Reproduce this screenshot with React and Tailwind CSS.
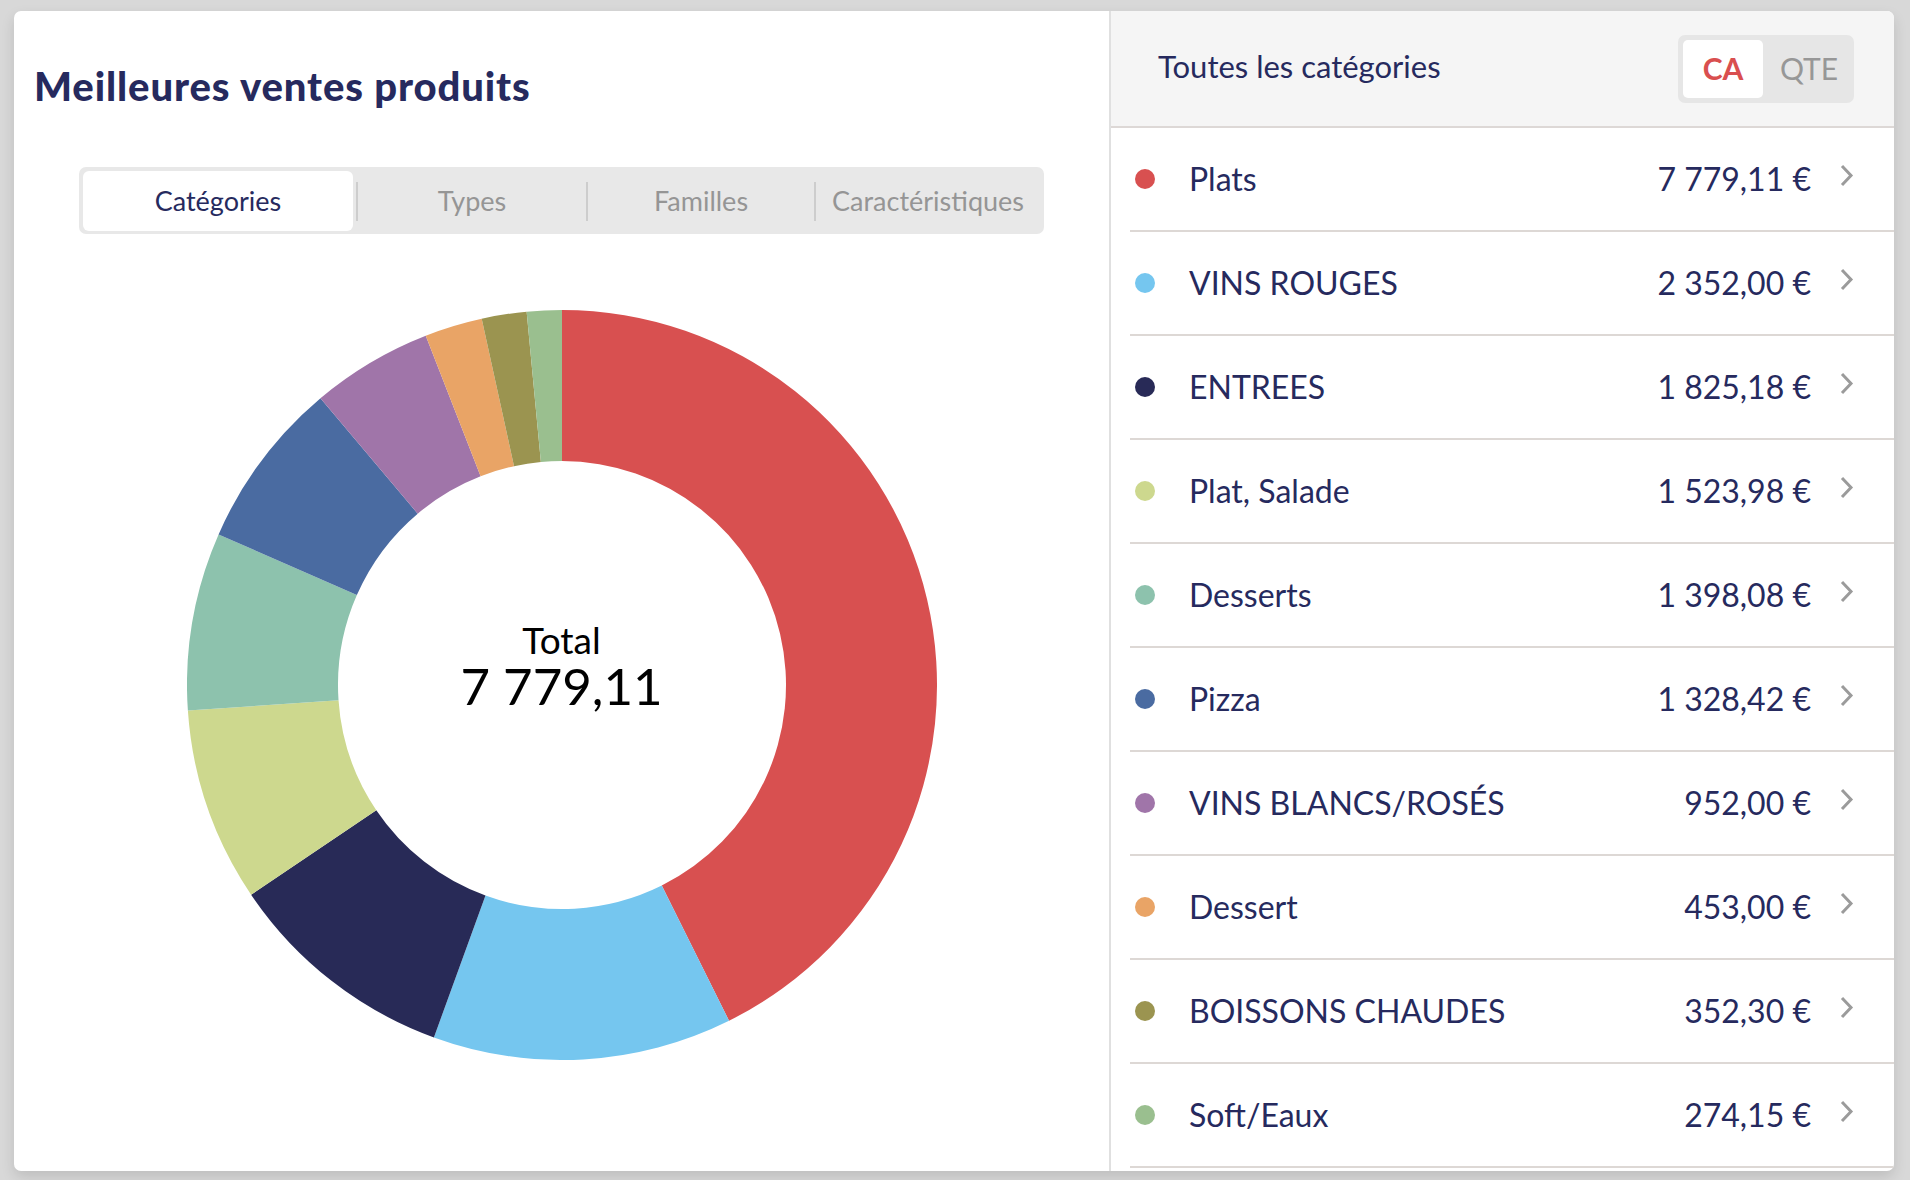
import React from 'react';

const NAVY = '#262a5e';

const categories = [
  { name: 'Plats', value: 7779.11, label: '7\u202f779,11 €', color: '#d85050' },
  { name: 'VINS ROUGES', value: 2352.0, label: '2\u202f352,00 €', color: '#75c6ef' },
  { name: 'ENTREES', value: 1825.18, label: '1\u202f825,18 €', color: '#282a57' },
  { name: 'Plat, Salade', value: 1523.98, label: '1\u202f523,98 €', color: '#cdd88e' },
  { name: 'Desserts', value: 1398.08, label: '1\u202f398,08 €', color: '#8dc2ad' },
  { name: 'Pizza', value: 1328.42, label: '1\u202f328,42 €', color: '#4a6ba1' },
  { name: 'VINS BLANCS/ROSÉS', value: 952.0, label: '952,00 €', color: '#a075a9' },
  { name: 'Dessert', value: 453.0, label: '453,00 €', color: '#e9a466' },
  { name: 'BOISSONS CHAUDES', value: 352.3, label: '352,30 €', color: '#9b9450' },
  { name: 'Soft/Eaux', value: 274.15, label: '274,15 €', color: '#9abf8f' },
];

const tabs = [
  { label: 'Catégories', w: 'w-[270px]' },
  { label: 'Types', w: 'w-[228px]' },
  { label: 'Familles', w: 'w-[226px]' },
  { label: 'Caractéristiques', w: 'flex-1' },
];

function arcPath(cx, cy, r, r0, a0, a1) {
  const p = (rad, a) => [cx + rad * Math.sin(a), cy - rad * Math.cos(a)];
  const large = a1 - a0 > Math.PI ? 1 : 0;
  const [x0, y0] = p(r, a0);
  const [x1, y1] = p(r, a1);
  const [x2, y2] = p(r0, a1);
  const [x3, y3] = p(r0, a0);
  return `M${x0} ${y0} A${r} ${r} 0 ${large} 1 ${x1} ${y1} L${x2} ${y2} A${r0} ${r0} 0 ${large} 0 ${x3} ${y3} Z`;
}

function Donut() {
  const total = categories.reduce((s, c) => s + c.value, 0);
  let acc = 0;
  return (
    <div className="relative w-[750px] h-[750px]">
      <svg width="750" height="750" viewBox="0 0 750 750">
        {categories.map(c => {
          const a0 = (acc / total) * Math.PI * 2;
          acc += c.value;
          const a1 = (acc / total) * Math.PI * 2;
          return <path key={c.name} d={arcPath(375, 375, 375, 224, a0, a1)} fill={c.color} />;
        })}
      </svg>
      <div className="absolute inset-0 flex flex-col items-center justify-center pb-[38px] text-black">
        <div className="text-[37px] leading-[40px]">Total</div>
        <div className="text-[51px] leading-[52px]">7 779,11</div>
      </div>
    </div>
  );
}

function Chevron() {
  return (
    <svg width="15" height="26" viewBox="0 0 15 26" className="shrink-0">
      <polyline points="3,3 12,12.5 3,22" fill="none" stroke="#9b9b9b" strokeWidth="3" />
    </svg>
  );
}

export default function App() {
  return (
    <div className="w-[1910px] h-[1180px] bg-[#d8d8d8] pt-[11px] pl-[14px]" style={{ fontFamily: 'Lato, "Noto Sans", sans-serif' }}>
      <div className="w-[1880px] h-[1160px] bg-white rounded-[7px] shadow-[0_6px_14px_rgba(0,0,0,0.12)] flex overflow-hidden">
        {/* Left panel */}
        <div className="w-[1097px] border-r-2 border-[#e0e0e0] flex flex-col">
          <h1 className="pl-[20px] pt-[55px] text-[40px] leading-[40px] font-black tracking-[0.9px]" style={{ color: NAVY }}>
            Meilleures ventes produits
          </h1>
          <div className="mx-auto mt-[61px] w-[965px] h-[67px] bg-[#e8e8e8] rounded-[7px] pl-[4px] pr-[4px] pt-[4px] pb-[3px] flex">
            {tabs.map((t, i) => (
              <div key={t.label} className={`flex items-center ${i === 3 ? 'flex-1' : ''}`}>
                {i > 1 && <div className="w-[2px] h-[39px] bg-[#cdcdcd]" />}
                {i === 1 && <div className="w-[2px] h-[39px] bg-[#cdcdcd] ml-[3px]" />}
                <div
                  className={`${t.w} h-[60px] flex items-center justify-center text-[27px] ${
                    i === 0 ? 'bg-white rounded-[6px]' : 'text-[#959595]'
                  }`}
                  style={i === 0 ? { color: NAVY } : undefined}
                >
                  {t.label}
                </div>
              </div>
            ))}
          </div>
          <div className="mx-auto mt-[76px]">
            <Donut />
          </div>
        </div>

        {/* Right panel */}
        <div className="flex-1 flex flex-col">
          <div className="h-[117px] bg-[#f5f5f5] border-b-2 border-[#ddd8d6] flex items-center justify-between pl-[47px] pr-[40px]">
            <div className="text-[31px] pb-[4px]" style={{ color: NAVY }}>Toutes les catégories</div>
            <div className="w-[176px] h-[68px] bg-[#e6e6e6] rounded-[7px] p-[5px] flex">
              <div className="w-[80px] h-full bg-white rounded-[5px] flex items-center justify-center text-[30px] font-bold text-[#d94f4f]">
                CA
              </div>
              <div className="flex-1 flex items-center justify-center pl-[6px] text-[30px] text-[#979797]">QTE</div>
            </div>
          </div>
          {categories.map(c => (
            <div key={c.name} className="h-[104px] shrink-0 ml-[19px] border-b-2 border-[#ddd8d5] flex items-center pr-[40px]">
              <div className="w-[20px] h-[20px] rounded-full ml-[5px] shrink-0" style={{ backgroundColor: c.color }} />
              <div className="ml-[34px] flex-1 text-[32px]" style={{ color: NAVY }}>{c.name}</div>
              <div className="text-[32px]" style={{ color: NAVY }}>{c.label}</div>
              <div className="ml-[28px] -mt-[6px]"><Chevron /></div>
            </div>
          ))}
        </div>
      </div>
    </div>
  );
}
